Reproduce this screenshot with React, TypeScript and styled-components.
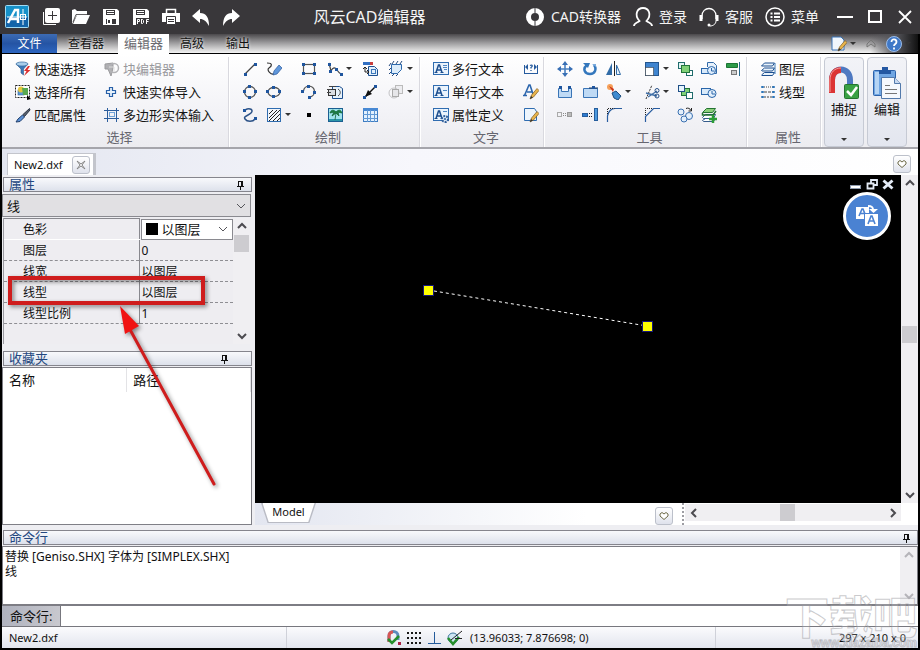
import React from "react";
import styled, { createGlobalStyle, css } from "styled-components";

const GlobalStyle = createGlobalStyle`
  * { box-sizing: border-box; }
  body { margin: 0; background: #39373a; }
  button, select, input { font: inherit; color: inherit; }
`;

const latin = `"Noto Sans", "Noto Sans CJK SC", sans-serif`;

/* ---------- window ---------- */

const Window = styled.div`
  position: relative;
  display: flex;
  flex-direction: column;
  height: 100vh;
  min-height: 600px;
  overflow: hidden;
  background: #000;
  color: #111;
  font: 12px/16px ${latin};
`;

const PlainButton = styled.button.attrs({ type: "button" })`
  display: flex;
  align-items: center;
  justify-content: center;
  padding: 0;
  border: 0;
  background: none;
`;

const TitleBar = styled.header`
  display: flex;
  align-items: center;
  height: 34px;
  flex: none;
  padding-left: 5px;
  background: #39373a;
  color: #f4f4f4;
`;

const Logo = styled.svg`
  width: 24px;
  height: 24px;
  flex: none;
  margin-right: 7px;
`;

const TitleTool = styled(PlainButton)`
  width: 30px;
  height: 34px;
  flex: none;
  color: #fff;
`;

const Title = styled.h1`
  flex: 1;
  margin: 0;
  padding-right: 32px;
  text-align: center;
  white-space: nowrap;
  font-size: 16px;
  font-weight: 400;
  line-height: 34px;
`;

const TitleActions = styled.div`
  display: flex;
  gap: 12px;
  margin-right: 11px;
`;

const TitleAction = styled(PlainButton)`
  gap: 6px;
  height: 34px;
  font-size: 14px;
  white-space: nowrap;
`;

const Body = styled.div`
  flex: 1;
  display: flex;
  flex-direction: column;
  min-height: 0;
  margin: 0 2px 2px;
  background: #eeeef2;
`;

/* ---------- ribbon ---------- */

const TabStrip = styled.nav`
  display: flex;
  height: 20px;
  flex: none;
  border-bottom: 1px solid #000;
  background: linear-gradient(#4b494c, #9a999b 45%, #f4f4f4);
`;

const RibbonTab = styled(PlainButton)<{ $kind?: "file" | "active" }>`
  padding: 0 11px;
  font-size: 12px;
  text-shadow: 0 0 3px #fff;
  ${(p) => p.$kind === "file" && css`
    width: 55px;
    color: #fff;
    text-shadow: none;
    background: linear-gradient(#3d6cb4, #2554a4 50%, #2d66c0);
  `}
  ${(p) => p.$kind === "active" && css`
    width: 51px;
    margin: 0 0 -1px 3px;
    padding: 0 0 2px;
    color: #6b6b70;
    font-size: 13px;
    background: #fff;
  `}
`;

const StripTools = styled.div`
  display: flex;
  align-items: center;
  gap: 9px;
  margin-left: auto;
  padding-right: 7px;
  background: linear-gradient(90deg, transparent 45%, #55555a 75%, #111);
`;

const Ribbon = styled.section`
  display: flex;
  height: 95px;
  flex: none;
  padding-top: 3px;
  border-bottom: 2px solid #a5a5ab;
  background: linear-gradient(#fff, #f3f3f7 60%, #ececf0);
`;

const Group = styled.div<{ $left: number; $right: number }>`
  display: flex;
  flex-direction: column;
  padding: 0 ${(p) => p.$right}px 0 ${(p) => p.$left}px;
  border-right: 1px solid #d9d9df;
  box-shadow: 1px 0 #fff;
`;

const GroupLabel = styled.div`
  text-align: center;
  color: #66666f;
  font-size: 13px;
  line-height: 22px;
`;

const ToolGrid = styled.div<{ $columns: string }>`
  display: grid;
  grid-template-columns: ${(p) => p.$columns};
  grid-auto-rows: 23px;
  align-items: center;
`;

const ToolButton = styled(PlainButton)<{ $dim?: boolean }>`
  justify-content: flex-start;
  gap: 3px;
  height: 23px;
  white-space: nowrap;
  font-size: 13px;
  color: ${(p) => (p.$dim ? "#98989c" : "#151515")};
`;

const Caret = styled.span`
  border: 3px solid transparent;
  border-top-color: #333;
  border-bottom: 0;
`;

const BigTool = styled(PlainButton)`
  flex-direction: column;
  justify-content: flex-start;
  width: 40px;
  height: 90px;
  margin-left: 3px;
  padding: 8px 0 5px;
  border: 1px solid #c6cad4;
  border-radius: 4px;
  background: linear-gradient(#f2f3f7, #e3e6ef);
  font-size: 13px;
  line-height: 18px;
  ${Caret} { margin-top: auto; }
`;

/* ---------- document area ---------- */

const DocTabs = styled.div`
  display: flex;
  align-items: flex-end;
  height: 26px;
  flex: none;
  padding: 0 7px 0 5px;
  background: linear-gradient(90deg, #e3e6f0, #f7f7fc 45%, #fff);
`;

const DocTab = styled.div`
  display: flex;
  align-items: center;
  gap: 9px;
  height: 22px;
  padding: 0 3px 0 6px;
  border: 1px solid #c3c5cc;
  border-width: 1px 3px 0 1px;
  background: #fff;
  font-size: 11px;
`;

const SmallButton = styled(PlainButton)`
  width: 18px;
  height: 18px;
  border: 1px solid #bcc0ca;
  border-radius: 3px;
  background: linear-gradient(#fff, #dfe2ec);
`;

const DocMenu = styled(SmallButton)`
  margin: 0 0 2px auto;
`;

const Workspace = styled.main`
  flex: 1;
  display: flex;
  gap: 3px;
  min-height: 0;
`;

const Sidebar = styled.aside`
  position: relative;
  display: flex;
  flex-direction: column;
  width: 250px;
  flex: none;
  padding-top: 2px;
`;

const PanelHeader = styled.h2<{ $pinGap: number }>`
  display: flex;
  align-items: center;
  justify-content: space-between;
  flex: none;
  height: 15px;
  margin: 0 0 1px 1px;
  padding: 0 ${(p) => p.$pinGap}px 0 5px;
  border: 1px solid #85858d;
  background: linear-gradient(#f8f9fc, #dde1eb);
  color: #24487f;
  font-size: 13px;
  font-weight: 400;
  line-height: 13px;
`;

const SelectBox = styled.label<{ $tone: "grey" | "white" }>`
  display: flex;
  align-items: center;
  gap: 4px;
  padding: 0 4px;
  border: 1px solid #8a8a90;
  font-size: 13px;
  ${(p) => p.$tone === "grey" ? css`
    height: 23px;
    margin: 1px 1px 1px 0;
    background: #e1e0e3;
  ` : css`
    height: 21px;
    background: #fff;
  `}
  select {
    flex: 1;
    min-width: 0;
    padding: 0;
    border: 0;
    background: none;
    appearance: none;
    line-height: 18px;
  }
`;

const Swatch = styled.span`
  width: 12px;
  height: 12px;
  background: #000;
`;

const PropertyArea = styled.div`
  display: flex;
  height: 126px;
  flex: none;
  margin: 0 2px 7px 1px;
  border-left: 1px solid #9a9aa0;
  background: #eeedf1;
`;

const PropertyTable = styled.table`
  flex: 1;
  align-self: flex-start;
  border-collapse: collapse;
  table-layout: fixed;
  th, td {
    height: 21px;
    padding: 1px 0 0;
    border-bottom: 1px dashed #8e8e93;
    text-align: left;
    font-weight: 400;
    line-height: 19px;
  }
  th { width: 135px; padding-left: 19px; border-right: 1px solid #88888e; }
  td { padding-left: 2px; }
  tr:first-child th { border: 1px solid #88888e; border-left: 0; border-bottom: 1px solid #fff; }
  tr:first-child td { padding: 0 0 0 1px; border: 0; }
`;

const ScrollTrack = styled.div<{ $across?: boolean }>`
  display: flex;
  flex-direction: ${(p) => (p.$across ? "row" : "column")};
  ${(p) => (p.$across ? "height: 17px; flex: 1;" : "width: 17px;")}
  flex-shrink: 0;
  background: #f0eff2;
`;

const ScrollButton = styled(PlainButton)<{ $dim?: boolean }>`
  width: 17px;
  height: 17px;
  flex: none;
  color: ${(p) => (p.$dim ? "#b5b4b9" : "#4c4b50")};
`;

const ScrollSpace = styled.div<{ $grow: number }>`
  flex: ${(p) => p.$grow} 1 0;
`;

const Thumb = styled.div`
  align-self: center;
  width: 15px;
  height: 17px;
  flex: none;
  background: #cdccd0;
`;

const FavouriteArea = styled.div`
  flex: 1;
  border: 1px solid #7f7f86;
  background: #fff;
`;

const FavouriteTable = styled.table`
  width: 248px;
  border-collapse: collapse;
  table-layout: fixed;
  th {
    height: 24px;
    padding: 0 0 0 6px;
    border-right: 1px solid #e3e3e6;
    text-align: left;
    font-size: 13px;
    font-weight: 400;
  }
`;

const Callout = styled.svg`
  position: absolute;
  left: 0;
  top: 96px;
  width: 230px;
  height: 224px;
  pointer-events: none;
  filter: drop-shadow(2px 2px 2px rgba(0, 0, 0, 0.45));
`;

const DrawingArea = styled.div`
  flex: 1;
  display: flex;
  flex-direction: column;
  min-width: 0;
`;

const CanvasRow = styled.div`
  flex: 1;
  display: flex;
  min-height: 0;
`;

const Canvas = styled.div`
  position: relative;
  flex: 1;
  background: #000;
`;

const Drawing = styled.svg`
  display: block;
  width: 100%;
  height: 100%;
`;

const ChildControls = styled.div`
  position: absolute;
  top: 2px;
  right: 5px;
  display: flex;
`;

const ChildButton = styled(PlainButton)`
  width: 16px;
  height: 14px;
`;

const TranslateButton = styled(PlainButton)`
  position: absolute;
  top: 17px;
  right: 10px;
  width: 48px;
  height: 48px;
  border: 3px solid #fff;
  border-radius: 50%;
  background: #4a82d2;
`;

const SheetBar = styled.div`
  display: flex;
  height: 22px;
  flex: none;
  padding-left: 6px;
  background: linear-gradient(90deg, #e3e6f0, #fff 50%, #fff);
`;

const SheetTab = styled(PlainButton)`
  width: 55px;
  height: 20px;
  background: #b9bbc4;
  font-size: 11px;
  clip-path: polygon(0 0, 100% 0, 88% 100%, 12% 100%);
`;

const SheetFace = styled.span`
  width: 52px;
  height: 19px;
  margin-bottom: 1px;
  line-height: 18px;
  background: #fff;
  clip-path: polygon(0 0, 100% 0, 88% 100%, 12% 100%);
`;

const SheetMenu = styled(SmallButton)`
  margin: 4px 9px 0 auto;
`;

const HorizontalScroll = styled.div`
  display: flex;
  align-items: flex-start;
  width: 236px;
  padding: 1px 17px 0 1px;
  border-left: 2px dotted #9d9da3;
`;

/* ---------- command line and status ---------- */

const CommandPanel = styled.section`
  flex: none;
  display: flex;
  flex-direction: column;
  padding-top: 5px;
`;

const LogRow = styled.div`
  display: flex;
  height: 60px;
  border: 1px solid #7d7d84;
  border-bottom-width: 2px;
  background: #fff;
`;

const Log = styled.div`
  flex: 1;
  padding: 2px;
  line-height: 15px;
`;

const CommandRow = styled.label`
  display: flex;
  height: 21px;
  border-bottom: 1px solid #77777e;
  background: #fff;
`;

const CommandLabel = styled.span`
  width: 59px;
  padding-left: 8px;
  border-right: 1px solid #77777e;
  background: linear-gradient(100deg, #aeb1bd, #c9c9cf);
  font-size: 13px;
  line-height: 20px;
`;

const CommandInput = styled.input`
  flex: 1;
  border: 0;
  outline: 0;
  background: none;
`;

const StatusBar = styled.footer`
  display: flex;
  height: 21px;
  flex: none;
  padding: 0 12px 0 7px;
  background: linear-gradient(#fbfbfd, #e2e5ee);
  font-size: 11px;
`;

const StatusCell = styled.div`
  display: flex;
  align-items: center;
  width: 277px;
`;

const StatusTools = styled(StatusCell)`
  flex: 1;
  gap: 4px;
  padding-left: 99px;
  border: 1px solid #cfd1d9;
  border-width: 0 1px;
  white-space: nowrap;
`;

const Coordinates = styled.span`
  margin-left: 4px;
`;

const StatusSize = styled(StatusCell)`
  width: 190px;
  justify-content: flex-end;
`;

const Watermark = styled.div`
  position: absolute;
  right: 3px;
  bottom: 1px;
  text-align: right;
  color: rgba(255, 255, 255, 0.2);
  font: 900 44px/44px "Noto Sans CJK SC", sans-serif;
  -webkit-text-stroke: 1px rgba(150, 150, 155, 0.5);
  pointer-events: none;
`;

const WatermarkSite = styled.div`
  font: 700 12px/12px "Liberation Sans", sans-serif;
`;

/* ---------- icon drawings ---------- */

const Svg = ({ w = 16, h = 16, children }: { w?: number; h?: number; children: React.ReactNode }) => (
  <svg width={w} height={h} viewBox={`0 0 ${w} ${h}`} fill="none" aria-hidden="true">{children}</svg>
);

const NAVY = "#1d4f8f";
const GREEN = "#7fd077";

const Nodes = ({ at }: { at: number[][] }) => (
  <>{at.map(([x, y]) => <rect key={`${x}-${y}`} x={x - 1} y={y - 1} width="3" height="3" fill="#1f559e" />)}</>
);

const Pencil = () => (
  <g>
    <path d="M7 15l1.5-4L14 4.500 16 6.500 10.500 13z" fill="#e9b54c" stroke="#7c5a23" strokeWidth=".7" />
    <path d="M7 15l1-3 2 1.500z" fill="#333" />
  </g>
);

const TextPage = ({ lines }: { lines: string }) => (
  <g>
    <rect x="0.500" y="1.500" width="15" height="12" fill="#eaf3fc" stroke="#2f6cb0" />
    <path d="M3 11.500L5.500 4h1L9 11.500M4 9h4" stroke={NAVY} strokeWidth="1.500" />
    <path d="M1.500 11.500h3M7.500 11.500h3" stroke={NAVY} />
    <path d={lines} stroke="#4f86c2" />
  </g>
);

const icons: Record<string, React.ReactNode> = {
  filter: <><path d="M1 3h12l-4.500 5v6L6 12V8z" fill="#3d78b8" stroke="#2b5585" strokeWidth=".6" /><ellipse cx="7" cy="3" rx="6" ry="2" fill="#a9cdea" stroke="#35689e" strokeWidth=".7" /><path d="M13 5l-4 5h2.500L9 15l6.500-6h-3L15 5z" fill="#dc2f2f" /></>,
  selectAll: <><rect x="0.500" y="1.500" width="14" height="12" fill="#fff" stroke="#222" strokeDasharray="2 1" /><rect x="3" y="6" width="6" height="5" fill="#5b98d4" stroke="#2c6199" strokeWidth=".6" /><circle cx="6" cy="5.500" r="3" fill="#e4c53c" /><path d="M7 4h6v7H8z" fill="#58a850" /><path d="M12 11v5l4-1z" fill="#000" /></>,
  brush: <><path d="M14.500 1.500L8 7.500 9.500 9.500 15 3z" fill="#59616e" stroke="#2a3342" /><path d="M7.500 8L3 12 1 15l4-.5L9.500 10z" fill="#5a8fd4" stroke="#213f6c" /></>,
  block: <><path d="M1 3l8-1v5L7 15 4 8H1z" fill="#b0b0b3" stroke="#9b9b9e" /><circle cx="10" cy="7" r="4.500" stroke="#b3b3b6" strokeWidth="1.500" /><path d="M5 6h5v4" stroke="#ddd" /></>,
  plus: <path d="M5.500 3.500h3v3h3v3h-3v3h-3v-3h-3v-3h3z" fill="#e6f1fb" stroke="#2860a8" strokeWidth="1.200" />,
  frame: <><path d="M3.500 1v14M12.500 1v14M0 3.500h15M0 11.500h15" stroke="#2c5d9c" /><rect x="5.500" y="5.500" width="5" height="4" stroke="#6fa2d8" /></>,
  line: <><path d="M3 13L13 3" stroke="#444" strokeWidth="1.300" /><Nodes at={[[3, 13], [13, 3]]} /></>,
  sketch: <><path d="M1 2c6 0 5 3 2 5s2 7 5 6" stroke="#333" strokeWidth="1.200" /><path d="M7 14l1-4 5-6 3 3-5 6z" fill="#5f97db" stroke="#2d599b" strokeWidth=".7" /></>,
  rect: <><rect x="2.500" y="3.500" width="11" height="9" stroke="#555" strokeWidth="1.200" /><Nodes at={[[2, 3], [13, 3], [2, 12], [13, 12]]} /></>,
  poly: <><path d="M2 2l2 8c2-4 4-4 6-1s2 3 4 4" stroke="#444" strokeWidth="1.200" /><Nodes at={[[2, 3], [3, 10], [9, 8], [14, 13]]} /></>,
  circle: <><circle cx="8" cy="8" r="5.500" stroke="#555" strokeWidth="1.300" /><Nodes at={[[7, 2], [2, 7], [13, 7], [7, 13]]} /></>,
  ellipse: <><ellipse cx="8" cy="8" rx="6" ry="4.500" stroke="#555" strokeWidth="1.300" /><Nodes at={[[7, 3], [1, 7], [13, 7], [7, 12]]} /></>,
  arc: <><path d="M2.500 7A5.500 5.500 0 1 1 9 13" stroke="#555" strokeWidth="1.300" /><Nodes at={[[1, 7], [7, 2], [13, 8], [8, 13]]} /></>,
  spline: <><path d="M3 3c5-3 9 0 6 3S1 9 3 12s8 3 10 0" stroke="#2c5287" strokeWidth="1.500" /><Nodes at={[[2, 3], [13, 11]]} /></>,
  hatch: <><rect x="1.500" y="1.500" width="13" height="13" fill="#f2f5f9" stroke="#2f6cb0" /><path d="M3 7l4-4M3 11l8-8M3 14L14 3M7 14l7-7M11 14l3-3" stroke="#222" /></>,
  point: <rect x="6" y="6" width="4" height="4" fill="#000" />,
  insert: <><rect x="1" y="1" width="9" height="3" fill="#326fc2" /><rect x="8" y="1" width="3" height="3" fill="#c93d3d" /><path d="M6.500 5.500h6l3 3v6h-9z" fill="#e2effb" stroke={NAVY} /><rect x="9.500" y="8.500" width="4" height="4" stroke="#3b77bb" /><path d="M3 6v5h4M1 8l2-2 2 2M5 9l2 2-2 2" stroke="#222" /></>,
  boundary: <><path d="M3.500 12.500v-9h10v5l-4 4z" fill="#dcecfa" stroke="#2d69ad" /><path d="M1 5l2-3M4 3l2-3M8 3l2-3M12 3l2-3M1 9l2-2M1 13l2-2M4 15l2-2M8 15l2-2" stroke="#24487d" /></>,
  copyPage: <><path d="M5.500 2.500h7l3 2v10h-10z" fill="#e6f1fa" stroke={NAVY} /><rect x="1.500" y="5.500" width="7" height="6" fill="#dadde2" stroke="#333" /><path d="M0 5.500h4M0 8.500h4M2 2.500h7M11 5c3 2 3 5 0 7" stroke="#444" /></>,
  arrow: <><path d="M2 14L14 2" stroke="#111" strokeWidth="1.500" /><path d="M3 13l3-7 4 4z" fill="#111" /><Nodes at={[[2, 13], [13, 2]]} /></>,
  region: <><rect x="7.500" y="1.500" width="7" height="8" fill="#ededf0" stroke="#bbb" /><circle cx="6" cy="9" r="5" stroke="#c4c4c6" /><rect x="4.500" y="5.500" width="6" height="7" fill="#e6e6e9" stroke="#aaa" /></>,
  palm: <><rect x="1.500" y="1.500" width="14" height="13" fill="#9fe3ec" stroke="#1b5f91" /><path d="M2 12h13v2H2z" fill="#2b95a8" /><path d="M8 13l1-7M9 5C6 2 4 3 3 6l4-1-2 4 4-3 3 3-1-4 4 1c-1-3-3-4-6-1z" fill="#1b8143" stroke="#136535" strokeWidth=".8" /></>,
  table: <><rect x="1.500" y="1.500" width="14" height="13" fill="#e3f1fe" stroke="#3f7dc2" /><rect x="1" y="1" width="15" height="3" fill="#4889d4" /><path d="M5.500 3v12M8.500 3v12M12.500 3v12M1 7.500h14M1 11.500h14" stroke="#6299d5" /></>,
  mtext: <TextPage lines="M10 4.500h4M10 6.500h4M11 8.500h3" />,
  stext: <TextPage lines="M10 6.500h4" />,
  attr: <><TextPage lines="M10 4.500h4" /><circle cx="12" cy="12" r="3" fill="#dce9f6" stroke="#315f9b" strokeWidth="2" strokeDasharray="2 1" /><circle cx="12" cy="12" r="1" fill="#315f9b" /></>,
  fit: <><path d="M1.500 4v8M14.500 4v8M1 12.500h14" stroke="#265b9e" /><path d="M5 3L2 6l3 3zM11 3l3 3-3 3z" fill="#265b9e" /><path d="M7 4.500c2.500-1.500 3 1 1 2v1M8 9v1" stroke="#265b9e" strokeWidth="1.300" /></>,
  editText: <><path d="M1.500 11.500L6 1h1l3 9M4 8h5M0 11.500h4" stroke="#2c66ad" strokeWidth="1.600" /><Pencil /></>,
  editPage: <><path d="M1.500 1.500h10l2 3v9h-12z" fill="#edf5fd" stroke="#2f6cb0" /><Pencil /></>,
  move: <><path d="M8 2v12M2 8h12" stroke="#4a80c0" strokeWidth="1.600" /><path d="M8 0l3 4H5zM8 16l3-4H5zM0 8l4-3v6zM16 8l-4-3v6z" fill="#386fb5" /></>,
  rotate: <><path d="M5 4c-5 4-2 9 3 9 5 0 7-5 4-9" stroke="#3377bd" strokeWidth="2.500" /><path d="M1 2h7l-2 5z" fill="#3377bd" /><path d="M10 3h4v3z" fill="#79aadd" /></>,
  mirror: <><path d="M6 2v12H0z" fill="#316ca7" /><path d="M10.500 4v9.500h4z" fill="#e8f2fb" stroke="#316ca7" /><path d="M8.500 0v15" stroke="#222" /></>,
  scale: <><rect x="1.500" y="1.500" width="13" height="13" fill="#3f84cf" stroke="#24568f" /><rect x="1.500" y="6.500" width="8" height="8" fill="#fff" stroke="#222" strokeDasharray="1 1" /></>,
  stack: <><rect x="1.500" y="1.500" width="6" height="6" fill="#e2f4f5" stroke="#1f6c6c" /><rect x="9.500" y="9.500" width="6" height="5" fill="#fff" stroke="#1f6c6c" /><rect x="4.500" y="4.500" width="8" height="7" fill={GREEN} stroke="#227439" /></>,
  stackBack: <><rect x="4.500" y="4.500" width="8" height="7" fill={GREEN} stroke="#227439" /><rect x="1.500" y="1.500" width="6" height="6" fill="#e6f4fc" stroke="#1e4f86" /><rect x="9.500" y="8.500" width="6" height="6" fill="#fff" stroke="#1f6c6c" /></>,
  group: <><path d="M6.500 6V1.500h6l3 3v8h-4" fill="#e7f1fb" stroke="#336ba9" /><rect x="0.500" y="7.500" width="8" height="5" fill="#d9eafa" stroke="#2a66aa" /><circle cx="10.500" cy="9.500" r="4" fill="#dfedfb" stroke="#2a66aa" /><path d="M10.500 7v3h3" stroke="#2a66aa" /></>,
  ungroup: <><rect x="0.500" y="4.500" width="9" height="6" fill="#d9eafa" stroke="#2a66aa" /><circle cx="11" cy="9.500" r="4" fill="#e4f0fc" stroke="#2a66aa" /><path d="M11 7v3h3" stroke="#2a66aa" /></>,
  align: <><path d="M0.500 2.500h11v4h-11z" fill="#2d9b48" stroke="#1d7535" /><rect x="5.500" y="9.500" width="5" height="4" fill="#ccc" stroke="#777" /><path d="M13.500 1v14" stroke="#286b8e" /></>,
  breakA: <><path d="M1.500 4.500h3v3h7v-3h3v9h-13z" fill="#bfdaf5" stroke="#3974b6" /><Nodes at={[[3, 3], [12, 3]]} /></>,
  breakB: <><path d="M1.500 4.500h14v9h-14z" fill="#bfdaf5" stroke="#3974b6" /><path d="M7 4h9" stroke="#16355e" /><Nodes at={[[11, 3]]} /></>,
  explode: <><circle cx="4" cy="3" r="3" fill="#f5a05a" /><path d="M3 2l4 6 1-3z" fill="#cb3215" /><path d="M6 9l4-2 5 5-3 4-4-2z" fill="#3f8bd0" stroke="#1f4e7d" /></>,
  trim: <><path d="M2 15L8 1" stroke="#333" strokeDasharray="2 1" /><path d="M2 9l11 3M4 13l9-6" stroke="#3f6fa7" strokeWidth="1.300" /><circle cx="13" cy="6.500" r="2" stroke="#244f87" /><circle cx="13" cy="12" r="2" stroke="#244f87" /></>,
  stretch: <><rect x="0.500" y="5.500" width="4" height="4" stroke="#aaa" /><path d="M6 6.500h4M6 8.500h4" stroke="#888" strokeDasharray="1 1" /><rect x="10.500" y="5.500" width="4" height="4" fill="#bbb" stroke="#999" /></>,
  extend: <><rect x="0.500" y="6.500" width="5" height="3" fill="#2d7bd0" stroke="#255d9d" /><path d="M7 6.500h4M7 9.500h4" stroke="#222" strokeDasharray="1 1" /><rect x="12.500" y="1.500" width="3" height="12" fill="#4d9ade" stroke="#255d9d" /></>,
  fillet: <><path d="M1.500 15V9C2 5 5 1.500 9 1.500h7" stroke="#285ca0" strokeWidth="1.200" /><path d="M1.500 7V1.500h7" stroke="#222" strokeDasharray="1 1" /></>,
  chamfer: <><path d="M1.500 15V9.500l8-8H16" stroke="#285ca0" strokeWidth="1.200" /><path d="M1.500 8V1.500h7" stroke="#222" strokeDasharray="1 1" /></>,
  array: <><circle cx="4" cy="5" r="3" fill="#e3effb" stroke="#3a70b1" /><circle cx="12" cy="9" r="3.500" fill="#e3effb" stroke="#3a70b1" /><circle cx="7" cy="12" r="3" fill="#e3effb" stroke="#3a70b1" /><path d="M9 1.500c2-1 4 0 5 2M14.500 1v3h-3" stroke="#222" /></>,
  layerAdd: <><path d="M1.500 10.500l3-3h10l-2 4h-10zM1.500 13.500l3-2h10l-2 3h-10z" fill="#fff" stroke="#355b8b" /><path d="M1.500 5.500l4-4h9l-3 4z" fill="#8bd07a" stroke="#247333" /><path d="M1.500 6v2H12l3-4" stroke="#247333" strokeWidth="1.500" /><path d="M12 8v8M8 12h8" stroke="#2c9d37" strokeWidth="2.500" /></>,
  layers: <><path d="M1.500 5l3-3h10l-2 3zM1.500 9.500l3-2.500h10l-2 3H2zM1.500 14l3-2.500h10l-2 3H2z" fill="#e9f3fc" stroke={NAVY} /><path d="M15 2v11" stroke="#407cb9" /></>,
  linetype: <><path d="M4 3h9" stroke="#444" strokeDasharray="1 1" /><path d="M4 8h9" stroke="#444" strokeDasharray="3 1" /><path d="M4 13h9" stroke="#444" strokeDasharray="2 1" /><g stroke="#2d75b8"><path d="M1.500 2.500h2v1h-2zM12.500 2.500h2v1h-2zM1.500 7.500h2v1h-2zM12.500 7.500h2v1h-2zM1.500 12.500h2v1h-2zM12.500 12.500h2v1h-2z" /></g></>,
  snap: <><path d="M3 12V6c0-6 9-6 9 0v4" stroke="#5d8bbd" strokeWidth="3" /><path d="M3 12V6c0-3 2-4 4-4" stroke="#d65555" strokeWidth="3" /><path d="M2 9l4 4 7-7" stroke="#258f2c" strokeWidth="2.500" /><rect x="12" y="12" width="3" height="3" fill="#aa2044" /></>,
  grid: <g fill="#171717">{[1, 5, 9, 13].flatMap((x) => [2, 7, 12].map((y) => <rect key={`${x}-${y}`} x={x} y={y} width="2" height="2" />))}</g>,
  ortho: <path d="M8.500 2v11M2 13.500h13" stroke="#235b9b" />,
  osnap: <><circle cx="7" cy="8" r="5" fill="#cce4f2" stroke="#3d769e" /><path d="M2 8l5 6 6-7" stroke="#258f2c" strokeWidth="2.500" /><path d="M5 10l11-9M9 8.500h7" stroke="#222" /></>,
};

const Chevron = ({ to }: { to: "up" | "down" | "left" | "right" }) => {
  const d = { up: "M2 7l4-4 4 4", down: "M2 4l4 4 4-4", left: "M8 2L4 6l4 4", right: "M4 2l4 4-4 4" }[to];
  return <Svg w={12} h={12}><path d={d} stroke="currentColor" strokeWidth="2" /></Svg>;
};

const ThinChevron = () => <Svg w={10} h={10}><path d="M1 3l4 4 4-4" stroke="#55555a" /></Svg>;
const Heart = () => <Svg w={10} h={10}><path d="M1 3l2-1.500L5 3l2-1.500L9 3v2L5 8.500 1 5z" stroke="#6d6a48" fill="#fff" /></Svg>;
const Pin = () => <Svg w={9} h={10}><path d="M2.500 1v5M5.500 1v5M6.500 1v5M2 1.500h5M1 6.500h7M4.500 6v4" stroke="#111" /></Svg>;

const titleTools = [
  ["新建", <><path d="M1.500 4v12.500H14" stroke="#fff" /><rect x="3" y="0" width="15" height="15" rx="2" fill="#fff" /><path d="M10.500 3v9M6 7.500h9" stroke="#39373a" /></>],
  ["打开", <><path d="M0 16V2l3-1 2 2h10v4H5z" fill="#fff" /><path d="M5 7h13l-4 9H1z" fill="#fff" /><path d="M1 14l3-7.500h13" stroke="#39373a" strokeWidth=".8" /></>],
  ["保存", <><path d="M1 1h14l2 2v14H1z" fill="#fff" /><path d="M4 2h9v5H4zM4 11h10v5H4z" fill="#39373a" /><path d="M5 3.500h7M5 5.500h7" stroke="#fff" /><path d="M5 11h5v5H5z" fill="#fff" /><path d="M7 12v3" stroke="#39373a" strokeWidth="2" /></>],
  ["另存为 PDF", <><path d="M1 1h14l2 2v14H1z" fill="#fff" /><path d="M4 2h9v5H4zM4 10h14v7H4z" fill="#39373a" /><path d="M5 3.500h7M5 5.500h7M5.500 16v-4.500h2v2h-2M9.500 11v4.500h1l1-1v-2l-1-1h-1M14.500 16v-4.500H17M14.500 13.500h2" stroke="#fff" /></>],
  ["打印", <><path d="M4.500 5V1.500h9V5" stroke="#fff" strokeWidth="1.500" /><path d="M0 5h18v9H0z" fill="#fff" /><path d="M4.500 8.500h9v8h-9z" fill="#fff" stroke="#39373a" /><path d="M6 11.500h6M6 13.500h6" stroke="#39373a" /></>],
  ["撤销", <path d="M0 8l8-7v4c6 0 9 4 9 13-3-5-5-7-9-7v4z" fill="#fff" />],
  ["重做", <path d="M18 8l-8-7v4C4 5 1 9 1 18c3-5 5-7 9-7v4z" fill="#fff" />],
] as [string, React.ReactNode][];

const titleActions = [
  ["CAD转换器", <><circle cx="10" cy="10" r="6.500" stroke="#fff" strokeWidth="5" /><path d="M10 0v6M10 14v6" stroke="#39373a" /></>],
  ["登录", <path d="M1 19c0-3 3-3 5.500-5C1 8 4 1 10 1s9 7 3.500 13C16 16 19 16 19 19" stroke="#fff" strokeWidth="1.800" />],
  ["客服", <><path d="M3 12V9c0-10 14-10 14 0v3" stroke="#fff" strokeWidth="1.300" /><path d="M2 8v6M18 8v6" stroke="#fff" strokeWidth="3" /><path d="M17 14c0 3-3 5-6 5" stroke="#fff" /><circle cx="10" cy="18" r="1.500" fill="#fff" /></>],
  ["菜单", <><circle cx="10" cy="10" r="9" stroke="#fff" strokeWidth="1.500" /><path d="M5.500 6.500h2M9 6.500h6M5.500 10h2M9 10h6M5.500 13.500h2M9 13.500h6" stroke="#fff" strokeWidth="1.800" /></>],
] as [string, React.ReactNode][];

const windowTools = [
  ["最小化", <path d="M1 9h16" stroke="#fff" strokeWidth="2" />],
  ["最大化", <rect x="3" y="3" width="12" height="11" stroke="#fff" strokeWidth="2" />],
  ["关闭", <path d="M3 3l12 12M15 3L3 15" stroke="#fff" strokeWidth="1.800" />],
] as [string, React.ReactNode][];

/* A tool is named by its icon; a trailing "+" adds a drop-down caret. */
const ToolCells = ({ names }: { names: string[] }) => (
  <>
    {names.map((name, i) => {
      const key = name.replace("+", "");
      if (!name) return <span key={i} />;
      return (
        <ToolButton key={i} aria-label={key}>
          <Svg>{icons[key]}</Svg>
          {name.endsWith("+") && <Caret />}
        </ToolButton>
      );
    })}
  </>
);

const TextTool = ({ icon, label, dim }: { icon: string; label: string; dim?: boolean }) => (
  <ToolButton $dim={dim}><Svg>{icons[icon]}</Svg>{label}</ToolButton>
);

const MagnetIcon = () => (
  <Svg w={32} h={34}>
    <path d="M4 27V14C4 0 22 0 22 14v11" stroke="#4e79c1" strokeWidth="6" />
    <path d="M4 27V14C4 7 8 4 13 4" stroke="#dc3434" strokeWidth="6" />
    <path d="M2 26V14C2 6 7 2 13 2" stroke="#f19a9a" />
    <rect x="16.500" y="18.500" width="14" height="14" rx="1" fill="#39a144" stroke="#24742f" />
    <path d="M19 25l4 4 6-8" stroke="#fff" strokeWidth="2.500" />
  </Svg>
);

const ClipboardIcon = () => (
  <Svg w={32} h={34}>
    <rect x="2.500" y="4.500" width="22" height="25" rx="1" fill="#6fa5e2" stroke="#2d62aa" />
    <path d="M4 6h4v22H4z" fill="#b5d4f4" />
    <path d="M8 4h3V1h6v3h3v4H8z" fill="#2458a2" />
    <path d="M10.500 11.500h13l6 6v15h-19z" fill="#f6f9fd" stroke="#5279ab" />
    <path d="M23.500 11.500v6h6" fill="#c9daf0" stroke="#5279ab" />
    <path d="M14 19.500h5M14 23.500h12M14 27.500h12" stroke="#777" />
  </Svg>
);

const properties = [["图层", "0"], ["线宽", "以图层"], ["线型", "以图层"], ["线型比例", "1"]];

export default function App() {
  return (
    <Window>
      <GlobalStyle />
      <TitleBar>
        <Logo viewBox="0 0 24 24" fill="none">
          <rect x="0.500" y="0.500" width="23" height="22" rx="1" fill="#1691c9" stroke="#a2dcf5" />
          <path d="M1 12h22v10H1z" fill="#1264a9" />
          <path d="M3 18L10 5h3v13M6 14h6" stroke="#fff" strokeWidth="2.500" />
          <path d="M2 12h20M18 4v16" stroke="#fff" />
          <rect x="15.500" y="9.500" width="5" height="5" stroke="#fff" />
        </Logo>
        {titleTools.map(([label, art]) => <TitleTool key={label} aria-label={label}><Svg w={18} h={18}>{art}</Svg></TitleTool>)}
        <Title>风云CAD编辑器</Title>
        <TitleActions>
          {titleActions.map(([label, art]) => <TitleAction key={label}><Svg w={20} h={20}>{art}</Svg>{label}</TitleAction>)}
        </TitleActions>
        {windowTools.map(([label, art]) => <TitleTool key={label} aria-label={label}><Svg w={18} h={18}>{art}</Svg></TitleTool>)}
      </TitleBar>

      <Body>
        <TabStrip>
          <RibbonTab $kind="file">文件</RibbonTab>
          <RibbonTab>查看器</RibbonTab>
          <RibbonTab $kind="active">编辑器</RibbonTab>
          <RibbonTab>高级</RibbonTab>
          <RibbonTab>输出</RibbonTab>
          <StripTools>
            <ToolButton aria-label="样式"><Svg><path d="M1 1h9l3 3v10H1z" fill="#f0f6fd" stroke="#3671b5" /><Pencil /></Svg><Caret /></ToolButton>
            <PlainButton aria-label="收起功能区"><Svg w={12} h={12}><path d="M2 6l4-4 4 4v3L6 6 2 9z" stroke="#777" /></Svg></PlainButton>
            <ToolButton aria-label="帮助"><Svg><circle cx="8" cy="8" r="7.500" fill="#3f78c7" stroke="#9bbce8" /><path d="M5.500 6c0-4 5-3 5 0 0 2-2.500 2-2.500 4M8 11.500v2" stroke="#fff" strokeWidth="1.800" /></Svg><Caret /></ToolButton>
          </StripTools>
        </TabStrip>

        <Ribbon>
          <Group $left={13} $right={4}>
            <ToolGrid $columns="89px 120px">
              <TextTool icon="filter" label="快速选择" /><TextTool icon="block" label="块编辑器" dim />
              <TextTool icon="selectAll" label="选择所有" /><TextTool icon="plus" label="快速实体导入" />
              <TextTool icon="brush" label="匹配属性" /><TextTool icon="frame" label="多边形实体输入" />
            </ToolGrid>
            <GroupLabel>选择</GroupLabel>
          </Group>
          <Group $left={13} $right={5}>
            <ToolGrid $columns="24px 35px 26px 35px 26px 26px">
              <ToolCells names={["line", "sketch", "rect", "poly+", "insert", "boundary+", "circle", "ellipse", "arc", "copyPage", "arrow", "region+", "spline", "hatch+", "point", "palm", "table"]} />
            </ToolGrid>
            <GroupLabel>绘制</GroupLabel>
          </Group>
          <Group $left={13} $right={4}>
            <ToolGrid $columns="90px 16px">
              <TextTool icon="mtext" label="多行文本" /><ToolCells names={["fit"]} />
              <TextTool icon="stext" label="单行文本" /><ToolCells names={["editText"]} />
              <TextTool icon="attr" label="属性定义" /><ToolCells names={["editPage"]} />
            </ToolGrid>
            <GroupLabel>文字</GroupLabel>
          </Group>
          <Group $left={13} $right={4}>
            <ToolGrid $columns="25px 24px 38px 33px 24px 25px 16px">
              <ToolCells names={["move", "rotate", "mirror", "scale+", "stack", "group", "align", "breakA", "breakB", "explode+", "trim+", "stackBack", "ungroup", "", "stretch", "extend", "fillet", "chamfer", "array", "layerAdd"]} />
            </ToolGrid>
            <GroupLabel>工具</GroupLabel>
          </Group>
          <Group $left={13} $right={4}>
            <ToolGrid $columns="56px">
              <TextTool icon="layers" label="图层" />
              <TextTool icon="linetype" label="线型" />
              <span />
            </ToolGrid>
            <GroupLabel>属性</GroupLabel>
          </Group>
          <BigTool><MagnetIcon />捕捉<Caret /></BigTool>
          <BigTool><ClipboardIcon />编辑<Caret /></BigTool>
        </Ribbon>

        <DocTabs>
          <DocTab>
            New2.dxf
            <SmallButton aria-label="关闭文档"><Svg w={10} h={10}><path d="M1 1l3 4-3 4 4-3 4 3-3-4 3-4-4 3z" stroke="#858585" fill="#fff" /></Svg></SmallButton>
          </DocTab>
          <DocMenu aria-label="文档列表"><Heart /></DocMenu>
        </DocTabs>

        <Workspace>
          <Sidebar>
            <PanelHeader $pinGap={6}>属性<Pin /></PanelHeader>
            <SelectBox $tone="grey">
              <select aria-label="对象"><option>线</option></select>
              <ThinChevron />
            </SelectBox>
            <PropertyArea>
              <PropertyTable>
                <tbody>
                  <tr>
                    <th scope="row">色彩</th>
                    <td>
                      <SelectBox $tone="white">
                        <Swatch />
                        <select aria-label="色彩"><option>以图层</option></select>
                        <ThinChevron />
                      </SelectBox>
                    </td>
                  </tr>
                  {properties.map(([name, value]) => <tr key={name}><th scope="row">{name}</th><td>{value}</td></tr>)}
                </tbody>
              </PropertyTable>
              <ScrollTrack>
                <ScrollButton aria-label="向上"><Chevron to="up" /></ScrollButton>
                <Thumb />
                <ScrollSpace $grow={1} />
                <ScrollButton aria-label="向下"><Chevron to="down" /></ScrollButton>
              </ScrollTrack>
            </PropertyArea>
            <PanelHeader $pinGap={22}>收藏夹<Pin /></PanelHeader>
            <FavouriteArea>
              <FavouriteTable><thead><tr><th>名称</th><th>路径</th></tr></thead></FavouriteTable>
            </FavouriteArea>
            <Callout viewBox="0 0 230 224" fill="none">
              <rect x="8" y="7" width="193" height="25" stroke="#cf1d1d" strokeWidth="4" />
              <path d="M212 213L125 53" stroke="#cf1d1d" strokeWidth="3" strokeLinecap="round" />
              <path d="M118 35l19 20-14 8z" fill="#f01212" />
            </Callout>
          </Sidebar>

          <DrawingArea>
            <CanvasRow>
              <Canvas>
                <Drawing>
                  <path d="M173 115L392 151" stroke="#fff" strokeDasharray="3 3" />
                  <rect x="168" y="110" width="11" height="11" fill="#17177a" />
                  <rect x="169" y="111" width="9" height="9" fill="#ff0" />
                  <rect x="387" y="146" width="11" height="11" fill="#17177a" />
                  <rect x="388" y="147" width="9" height="9" fill="#ff0" />
                </Drawing>
                <ChildControls>
                  <ChildButton aria-label="最小化图纸"><Svg w={12} h={12}><rect x="0.500" y="7.500" width="10" height="3" fill="#fff" stroke="#8c98ac" /></Svg></ChildButton>
                  <ChildButton aria-label="还原图纸"><Svg w={12} h={12}><path d="M5 5V2h6v5H8M1.500 5.500h6v5h-6z" stroke="#e3eaf5" strokeWidth="1.800" /></Svg></ChildButton>
                  <ChildButton aria-label="关闭图纸"><Svg w={12} h={12}><path d="M1.500 2.500l9 8M10.500 2.500l-9 8" stroke="#e3eaf5" strokeWidth="3" /></Svg></ChildButton>
                </ChildControls>
                <TranslateButton aria-label="转换">
                  <Svg w={24} h={24}>
                    <rect x="1" y="3" width="13" height="12" fill="#fff" />
                    <rect x="9.500" y="9.500" width="14" height="13" fill="#fff" stroke="#4a82d2" />
                    <path d="M4 12l3-7h1l2 5M5 9.500h4M13 20l3-8h1l3 8M14 17h5" stroke="#4a82d2" strokeWidth="1.600" />
                    <path d="M13 2c4 0 5 1 5 4" stroke="#fff" strokeWidth="2" />
                    <path d="M14 5h9l-4.500 4z" fill="#fff" />
                  </Svg>
                </TranslateButton>
              </Canvas>
              <ScrollTrack>
                <ScrollButton aria-label="向上滚动"><Chevron to="up" /></ScrollButton>
                <ScrollSpace $grow={134} />
                <Thumb />
                <ScrollSpace $grow={143} />
                <ScrollButton aria-label="向下滚动"><Chevron to="down" /></ScrollButton>
              </ScrollTrack>
            </CanvasRow>
            <SheetBar>
              <SheetTab><SheetFace>Model</SheetFace></SheetTab>
              <SheetMenu aria-label="布局列表"><Heart /></SheetMenu>
              <HorizontalScroll>
                <ScrollTrack $across>
                  <ScrollButton aria-label="向左滚动"><Chevron to="left" /></ScrollButton>
                  <ScrollSpace $grow={78} />
                  <Thumb />
                  <ScrollSpace $grow={89} />
                  <ScrollButton aria-label="向右滚动"><Chevron to="right" /></ScrollButton>
                </ScrollTrack>
              </HorizontalScroll>
            </SheetBar>
          </DrawingArea>
        </Workspace>

        <CommandPanel>
          <PanelHeader $pinGap={6}>命令行<Pin /></PanelHeader>
          <LogRow>
            <Log>
              <div>替换 [Geniso.SHX] 字体为 [SIMPLEX.SHX]</div>
              <div>线</div>
            </Log>
            <ScrollTrack>
              <ScrollButton $dim aria-label="日志向上"><Chevron to="up" /></ScrollButton>
              <ScrollSpace $grow={1} />
              <ScrollButton $dim aria-label="日志向下"><Chevron to="down" /></ScrollButton>
            </ScrollTrack>
          </LogRow>
          <CommandRow>
            <CommandLabel>命令行:</CommandLabel>
            <CommandInput type="text" />
          </CommandRow>
        </CommandPanel>

        <StatusBar>
          <StatusCell>New2.dxf</StatusCell>
          <StatusTools>
            <ToolCells names={["snap", "grid", "ortho", "osnap"]} />
            <Coordinates>(13.96033; 7.876698; 0)</Coordinates>
          </StatusTools>
          <StatusSize>297 x 210 x 0</StatusSize>
        </StatusBar>
      </Body>
      <Watermark aria-hidden="true">
        下载吧
        <WatermarkSite>www.xiazaiba.com</WatermarkSite>
      </Watermark>
    </Window>
  );
}
